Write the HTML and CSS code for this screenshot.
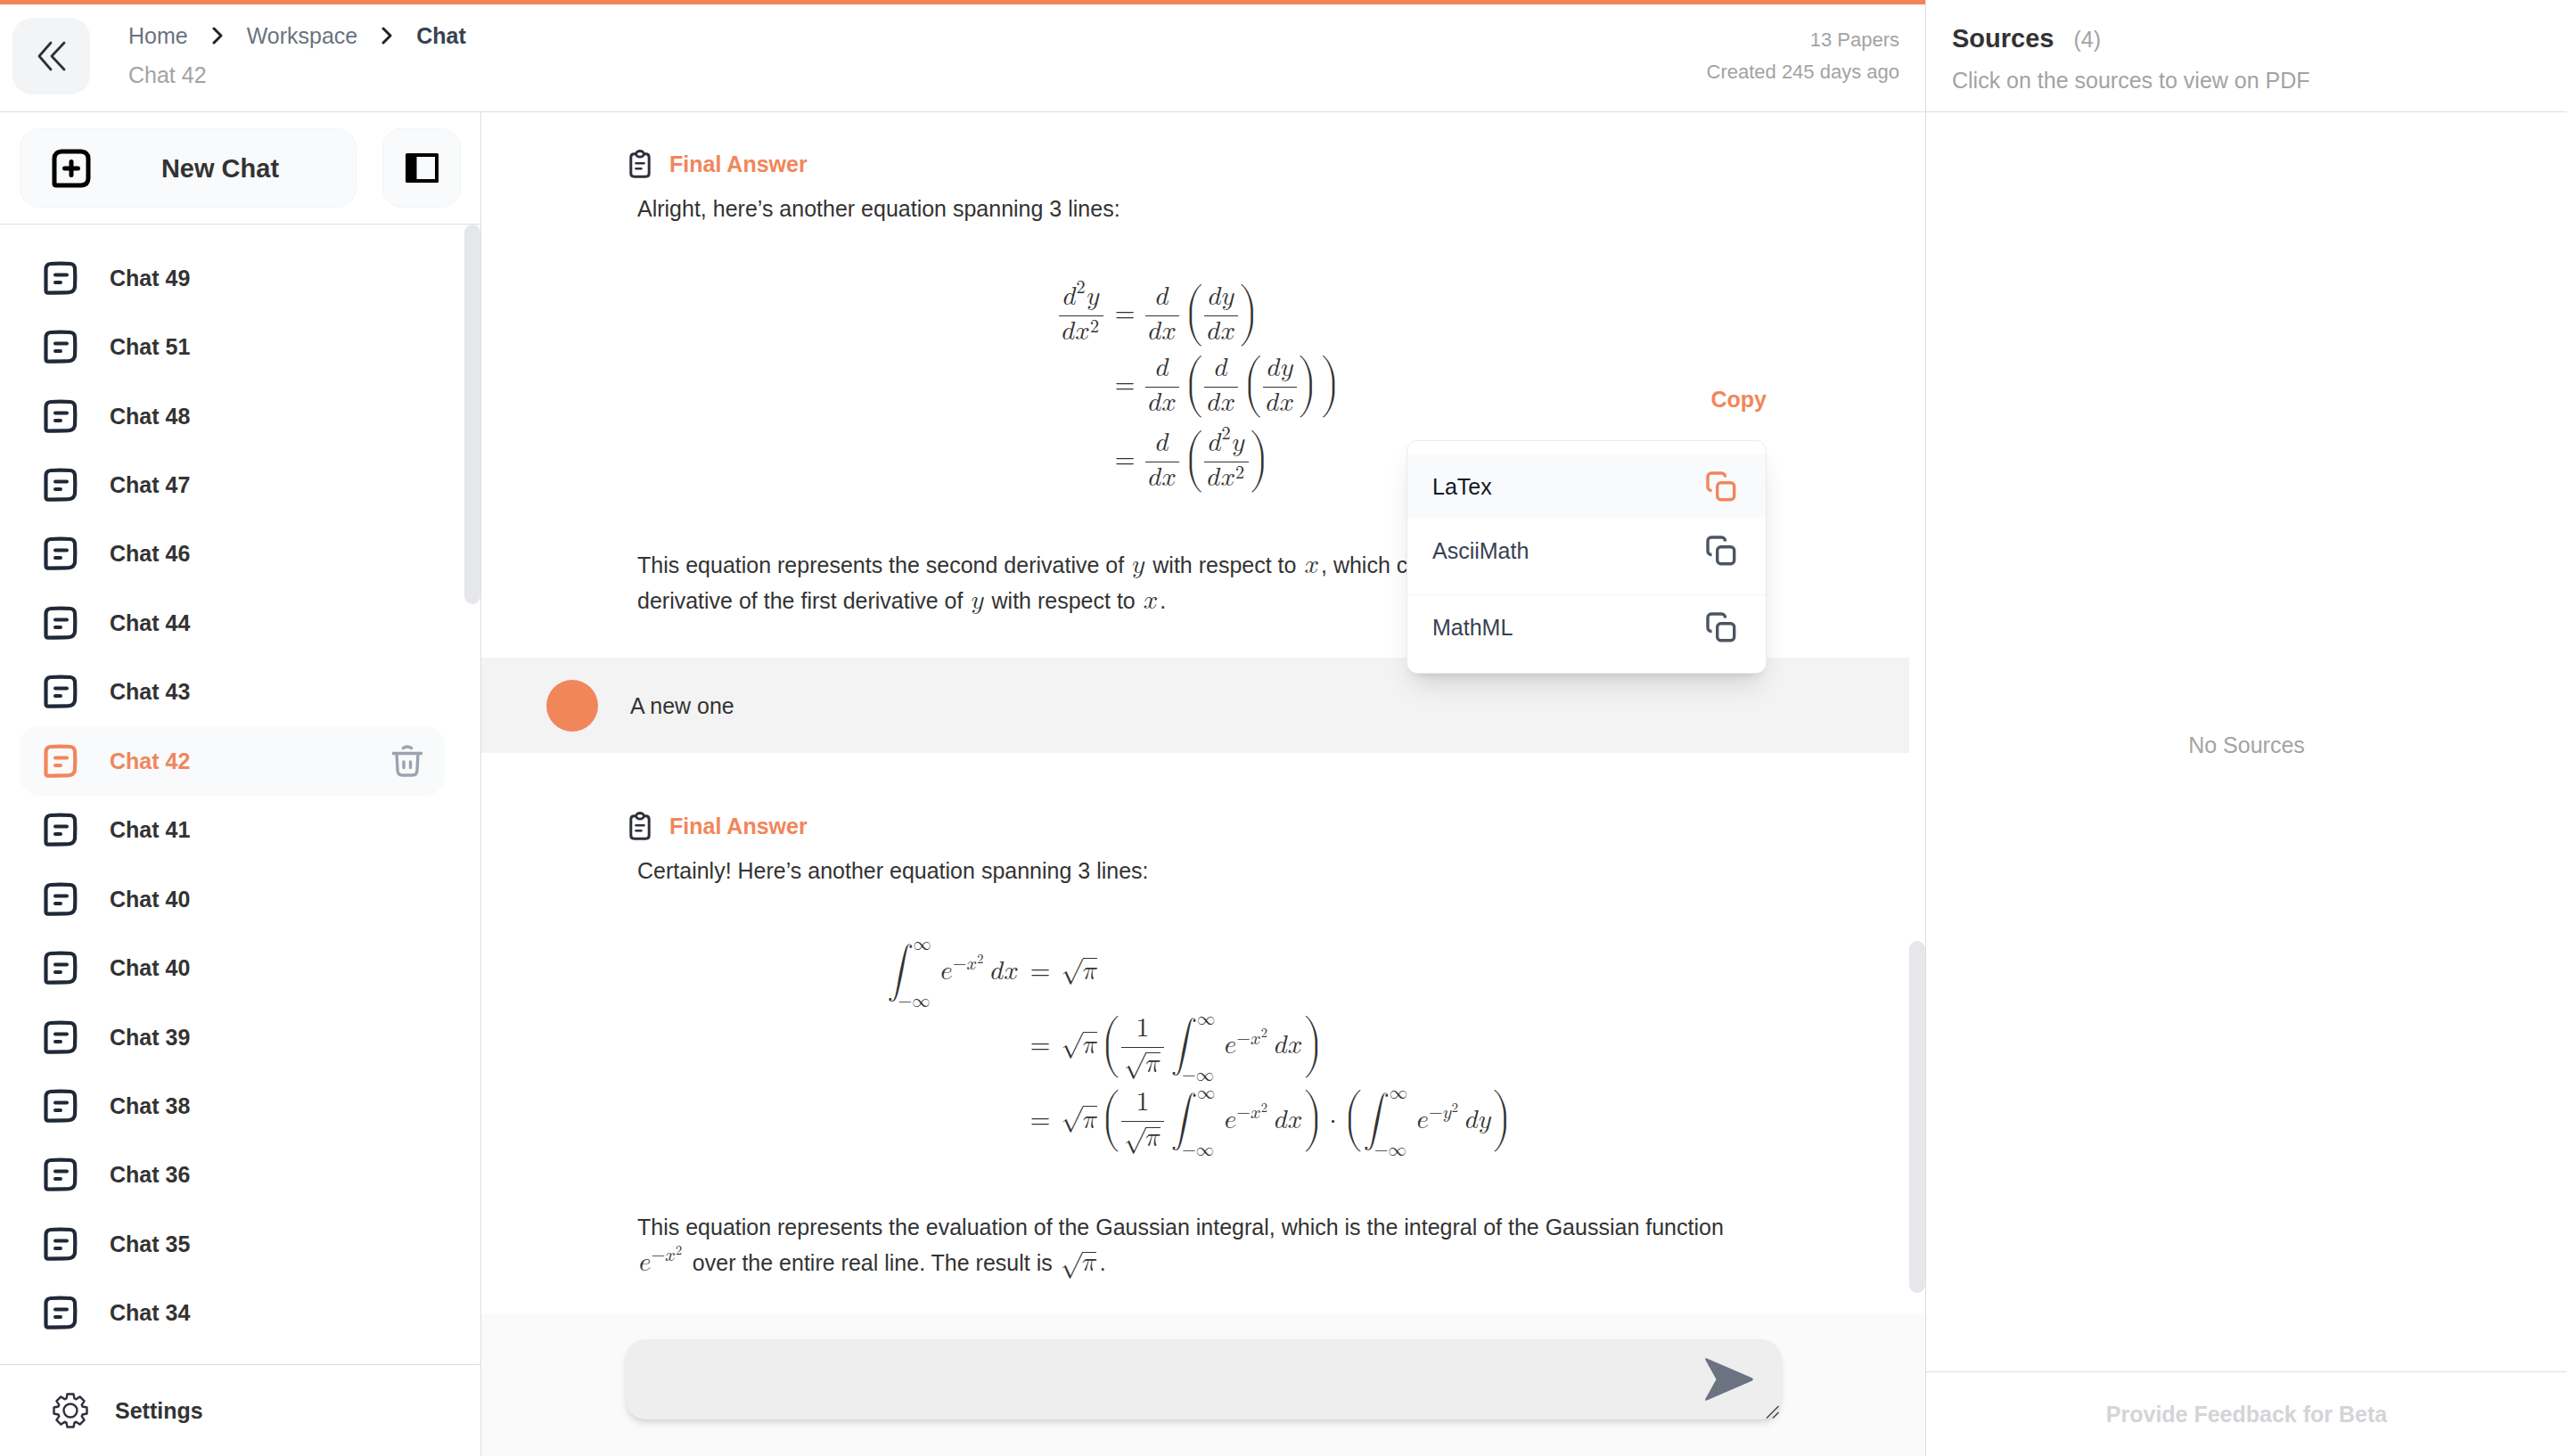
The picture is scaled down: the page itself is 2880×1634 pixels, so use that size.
FILE: index.html
```
<!DOCTYPE html>
<html lang="en">
<head>
<meta charset="utf-8">
<title>Chat 42</title>
<link rel="stylesheet" href="styles.css">
</head>
<body>
<svg class="sprite" aria-hidden="true">
  <symbol id="i-chat" viewBox="0 0 38 38"><path d="M2.500 33V9Q2.500 3.500 8 3Q19 2.200 30 3Q34.600 3.600 35 8Q35.600 18 35 29Q34.400 34.600 28 35.200Q20 35.600 5 35.600Q2.500 35.600 2.500 33Z" fill="none" stroke="currentColor" stroke-width="4.200"/><path d="M13 15.500H26M13 24H19" fill="none" stroke="currentColor" stroke-width="4" stroke-linecap="round"/></symbol>
  <symbol id="i-copy" viewBox="0 0 34 34"><path d="M6.500 21.500H6a4 4 0 0 1-4-4V6a4 4 0 0 1 4-4h11.500a4 4 0 0 1 4 4v.5" fill="none" stroke="currentColor" stroke-width="3.400"/><rect x="12.700" y="12.700" width="19" height="19" rx="4" fill="none" stroke="currentColor" stroke-width="3.400"/></symbol>
  <symbol id="i-note" viewBox="0 0 24 32"><path d="M8 4.800H5.500Q1.800 4.800 1.800 8.500V26.500Q1.800 30.200 5.500 30.200H18.500Q22.200 30.200 22.200 26.500V8.500Q22.200 4.800 18.500 4.800H16" fill="none" stroke="currentColor" stroke-width="3"/><ellipse cx="12" cy="4.800" rx="4.300" ry="3.300" fill="none" stroke="currentColor" stroke-width="2.800"/><path d="M7.500 15.200H16.500M7.500 21.200H13.500" fill="none" stroke="currentColor" stroke-width="2.600" stroke-linecap="round"/></symbol>
  <symbol id="i-next" viewBox="0 0 12 20"><path d="M2 2L10 10L2 18" fill="none" stroke="currentColor" stroke-width="3" stroke-linecap="round" stroke-linejoin="round"/></symbol>
</svg>
<div class="app">
  <header class="topbar">
    <button class="collapse" aria-label="Collapse"><svg width="32" height="34" viewBox="0 0 32 34"><path d="M15 2L2 17L15 32M30 2L16 17L30 32" fill="none" stroke="currentColor" stroke-width="2.800" stroke-linecap="round" stroke-linejoin="round"/></svg></button>
    <div class="crumbs">
      <nav>
        <a href="#">Home</a><svg width="12" height="20"><use href="#i-next"/></svg><a href="#">Workspace</a><svg width="12" height="20"><use href="#i-next"/></svg><a href="#" class="here">Chat</a>
      </nav>
      <p>Chat 42</p>
    </div>
    <div class="meta"><p>13 Papers</p><p>Created 245 days ago</p></div>
  </header>

  <aside class="sidebar">
    <div class="tools">
      <button class="new-chat"><svg width="44" height="44" viewBox="0 0 44 44"><path d="M3 39V11Q3 3.500 11 3H33Q41 3.500 41 11V33Q41 40.500 33 41H5Q3 41 3 39Z" fill="none" stroke="#000" stroke-width="5"/><path d="M22 14.500V29.500M14.500 22H29.500" stroke="#000" stroke-width="5" stroke-linecap="round"/></svg><span>New Chat</span></button>
      <button class="panel" aria-label="Toggle sidebar"><svg width="37" height="33" viewBox="0 0 37 33"><path fill="#000" fill-rule="evenodd" d="M1.500 0H35.500Q37 0 37 1.500V31.500Q37 33 35.500 33H1.500Q0 33 0 31.500V1.500Q0 0 1.500 0ZM12.500 4V29H33V4Z"/></svg></button>
    </div>
    <div class="history">
      <ul class="chats">
        <li><a href="#"><svg width="38" height="38"><use href="#i-chat"/></svg>Chat 49</a></li>
        <li><a href="#"><svg width="38" height="38"><use href="#i-chat"/></svg>Chat 51</a></li>
        <li><a href="#"><svg width="38" height="38"><use href="#i-chat"/></svg>Chat 48</a></li>
        <li><a href="#"><svg width="38" height="38"><use href="#i-chat"/></svg>Chat 47</a></li>
        <li><a href="#"><svg width="38" height="38"><use href="#i-chat"/></svg>Chat 46</a></li>
        <li><a href="#"><svg width="38" height="38"><use href="#i-chat"/></svg>Chat 44</a></li>
        <li><a href="#"><svg width="38" height="38"><use href="#i-chat"/></svg>Chat 43</a></li>
        <li class="current"><a href="#"><svg width="38" height="38"><use href="#i-chat"/></svg>Chat 42</a><button class="trash" aria-label="Delete chat"><svg width="34" height="36" viewBox="0 0 34 36"><path d="M1 9.500H33M12.500 3.500Q17 .5 21.500 3.500M5 9.500L6 28Q6 34 11.500 34H22.500Q28 34 28 28L29 9.500M13 19V25.500M20.500 19V25.500" fill="none" stroke="currentColor" stroke-width="3.400" stroke-linecap="round"/></svg></button></li>
        <li><a href="#"><svg width="38" height="38"><use href="#i-chat"/></svg>Chat 41</a></li>
        <li><a href="#"><svg width="38" height="38"><use href="#i-chat"/></svg>Chat 40</a></li>
        <li><a href="#"><svg width="38" height="38"><use href="#i-chat"/></svg>Chat 40</a></li>
        <li><a href="#"><svg width="38" height="38"><use href="#i-chat"/></svg>Chat 39</a></li>
        <li><a href="#"><svg width="38" height="38"><use href="#i-chat"/></svg>Chat 38</a></li>
        <li><a href="#"><svg width="38" height="38"><use href="#i-chat"/></svg>Chat 36</a></li>
        <li><a href="#"><svg width="38" height="38"><use href="#i-chat"/></svg>Chat 35</a></li>
        <li><a href="#"><svg width="38" height="38"><use href="#i-chat"/></svg>Chat 34</a></li>
      </ul>
      <div class="track"><div class="thumb thumb-history"></div></div>
    </div>
    <a href="#" class="settings"><svg width="40" height="40" viewBox="-20 -20 40 40"><path d="M-4.500-13.500L-3.500-18.500H3.500L4.500-13.500L6.400-12.700L10.600-15.600L15.600-10.600L12.700-6.400L13.500-4.500L18.500-3.500V3.500L13.500 4.500L12.700 6.400L15.600 10.600L10.600 15.600L6.400 12.700L4.500 13.500L3.500 18.500H-3.500L-4.500 13.500L-6.400 12.700L-10.600 15.600L-15.600 10.600L-12.700 6.400L-13.500 4.500L-18.500 3.500V-3.500L-13.500-4.500L-12.700-6.400L-15.600-10.600L-10.600-15.600L-6.400-12.700Z" fill="none" stroke="#2d303c" stroke-width="2.400" stroke-linejoin="round"/><circle r="7.500" fill="none" stroke="#2d303c" stroke-width="2.400"/></svg>Settings</a>
  </aside>

  <main class="main">
    <div class="thread-area">
      <div class="thread">
        <article class="answer first">
          <h2><svg width="24" height="32"><use href="#i-note"/></svg>Final Answer</h2>
          <p>Alright, here’s another equation spanning 3 lines:</p>
          <div class="equation">
            <math display="block">
              <mtable displaystyle="true">
                <mtr>
                  <mtd><mfrac><mrow><msup><mi>d</mi><mn>2</mn></msup><mi>y</mi></mrow><mrow><mspace width="3px"/><mi>d</mi><msup><mi>x</mi><mn>2</mn></msup><mspace width="3px"/></mrow></mfrac></mtd>
                  <mtd><mo lspace="13px" rspace="12px">=</mo><mfrac><mi>d</mi><mrow><mspace width="3px"/><mi>d</mi><mi>x</mi><mspace width="3px"/></mrow></mfrac><mspace width="3px"/><mrow><mo maxsize="69px">(</mo><mfrac><mrow><mi>d</mi><mi>y</mi></mrow><mrow><mspace width="3px"/><mi>d</mi><mi>x</mi><mspace width="3px"/></mrow></mfrac><mo maxsize="69px">)</mo></mrow></mtd>
                </mtr>
                <mtr>
                  <mtd></mtd>
                  <mtd><mo lspace="13px" rspace="12px">=</mo><mfrac><mi>d</mi><mrow><mspace width="3px"/><mi>d</mi><mi>x</mi><mspace width="3px"/></mrow></mfrac><mspace width="3px"/><mrow><mo maxsize="69px">(</mo><mfrac><mi>d</mi><mrow><mspace width="3px"/><mi>d</mi><mi>x</mi><mspace width="3px"/></mrow></mfrac><mspace width="3px"/><mrow><mo maxsize="69px">(</mo><mfrac><mrow><mi>d</mi><mi>y</mi></mrow><mrow><mspace width="3px"/><mi>d</mi><mi>x</mi><mspace width="3px"/></mrow></mfrac><mo maxsize="69px">)</mo></mrow><mo maxsize="69px">)</mo></mrow></mtd>
                </mtr>
                <mtr>
                  <mtd></mtd>
                  <mtd><mo lspace="13px" rspace="12px">=</mo><mfrac><mi>d</mi><mrow><mspace width="3px"/><mi>d</mi><mi>x</mi><mspace width="3px"/></mrow></mfrac><mspace width="3px"/><mrow><mo maxsize="69px">(</mo><mfrac><mrow><msup><mi>d</mi><mn>2</mn></msup><mi>y</mi></mrow><mrow><mspace width="3px"/><mi>d</mi><msup><mi>x</mi><mn>2</mn></msup><mspace width="3px"/></mrow></mfrac><mo maxsize="69px">)</mo></mrow></mtd>
                </mtr>
              </mtable>
            </math>
            <div class="copy-wrap">
              <button class="copy">Copy</button>
              <div class="menu">
                <div class="group">
                  <button class="item active">LaTex<svg width="34" height="34"><use href="#i-copy"/></svg></button>
                  <button class="item">AsciiMath<svg width="34" height="34"><use href="#i-copy"/></svg></button>
                </div>
                <div class="group">
                  <button class="item">MathML<svg width="34" height="34"><use href="#i-copy"/></svg></button>
                </div>
              </div>
            </div>
          </div>
          <p>This equation represents the second derivative of <math><mi>y</mi></math> with respect to <math><mi>x</mi></math>, which can be obtained by taking the derivative of the first derivative of <math><mi>y</mi></math> with respect to <math><mi>x</mi></math>.</p>
        </article>

        <div class="question"><span class="avatar"></span><p>A new one</p></div>

        <article class="answer">
          <h2><svg width="24" height="32"><use href="#i-note"/></svg>Final Answer</h2>
          <p>Certainly! Here’s another equation spanning 3 lines:</p>
          <div class="equation">
            <math display="block">
              <mtable displaystyle="true">
                <mtr>
                  <mtd><msubsup><mo lspace="0px" rspace="0px">∫</mo><mrow><mo>−</mo><mi>∞</mi></mrow><mi>∞</mi></msubsup><msup><mi>e</mi><mrow><mo>−</mo><msup><mi>x</mi><mn>2</mn></msup></mrow></msup><mspace width="5px"/><mi>d</mi><mi>x</mi></mtd>
                  <mtd><mo lspace="13px" rspace="12px">=</mo><msqrt><mspace height="20px"/><mi>π</mi></msqrt></mtd>
                </mtr>
                <mtr>
                  <mtd></mtd>
                  <mtd><mo lspace="13px" rspace="12px">=</mo><msqrt><mspace height="20px"/><mi>π</mi></msqrt><mrow><mo maxsize="69px">(</mo><mfrac><mn>1</mn><mrow><mspace width="3px"/><msqrt><mspace height="20px"/><mi>π</mi></msqrt><mspace width="3px"/></mrow></mfrac><mspace width="8px"/><msubsup><mo lspace="0px" rspace="0px">∫</mo><mrow><mo>−</mo><mi>∞</mi></mrow><mi>∞</mi></msubsup><msup><mi>e</mi><mrow><mo>−</mo><msup><mi>x</mi><mn>2</mn></msup></mrow></msup><mspace width="5px"/><mi>d</mi><mi>x</mi><mo maxsize="69px">)</mo></mrow></mtd>
                </mtr>
                <mtr>
                  <mtd></mtd>
                  <mtd><mo lspace="13px" rspace="12px">=</mo><msqrt><mspace height="20px"/><mi>π</mi></msqrt><mrow><mo maxsize="69px">(</mo><mfrac><mn>1</mn><mrow><mspace width="3px"/><msqrt><mspace height="20px"/><mi>π</mi></msqrt><mspace width="3px"/></mrow></mfrac><mspace width="8px"/><msubsup><mo lspace="0px" rspace="0px">∫</mo><mrow><mo>−</mo><mi>∞</mi></mrow><mi>∞</mi></msubsup><msup><mi>e</mi><mrow><mo>−</mo><msup><mi>x</mi><mn>2</mn></msup></mrow></msup><mspace width="5px"/><mi>d</mi><mi>x</mi><mo maxsize="69px">)</mo></mrow><mo>⋅</mo><mrow><mo maxsize="69px">(</mo><msubsup><mo lspace="0px" rspace="0px">∫</mo><mrow><mo>−</mo><mi>∞</mi></mrow><mi>∞</mi></msubsup><msup><mi>e</mi><mrow><mo>−</mo><msup><mi>y</mi><mn>2</mn></msup></mrow></msup><mspace width="5px"/><mi>d</mi><mi>y</mi><mo maxsize="69px">)</mo></mrow></mtd>
                </mtr>
              </mtable>
            </math>
          </div>
          <p>This equation represents the evaluation of the Gaussian integral, which is the integral of the Gaussian function <math><msup><mi>e</mi><mrow><mo>−</mo><msup><mi>x</mi><mn>2</mn></msup></mrow></msup></math> over the entire real line. The result is <math><msqrt><mspace height="20px"/><mi>π</mi></msqrt></math>.</p>
        </article>
      </div>
      <div class="track"><div class="thumb thumb-thread"></div></div>
    </div>
    <form class="composer">
      <div class="field">
        <textarea aria-label="Message"></textarea>
        <button type="button" class="send" aria-label="Send"><svg width="54" height="48" viewBox="0 0 54 48"><path d="M1.500 .3L53 22.500Q54.500 24 53 25.500L1.500 47.700Q-.5 48 .3 46L12.500 24L.3 2Q-.5 0 1.500 .3Z" fill="#6b7280"/></svg></button>
        <svg class="grip" width="16" height="16" viewBox="0 0 16 16"><path d="M1 14.500L14.500 1M8 14.500L14.500 8" stroke="#444" stroke-width="1.500"/></svg>
      </div>
    </form>
  </main>

  <section class="sources">
    <header><h1>Sources <span>(4)</span></h1><p>Click on the sources to view on PDF</p></header>
    <div class="empty">No Sources</div>
    <footer><button>Provide Feedback for Beta</button></footer>
  </section>
</div>
</body>
</html>
```
FILE: styles.css
```
* { box-sizing: border-box; margin: 0; padding: 0; }
body { font: 25px/40px "Liberation Sans", Arial, sans-serif; color: #333; background: #fff; }
button { font: inherit; color: inherit; border: 0; background: none; cursor: pointer; }
a { color: inherit; text-decoration: none; }
svg { display: block; flex: none; }
.sprite { display: none; }

.app {
  display: grid;
  grid-template: 126px minmax(0, 1fr) / 540px minmax(0, 1fr) 25%;
  grid-template-areas: "top top sources" "side main sources";
  height: 100vh;
}

/* top bar */
.topbar { grid-area: top; display: flex; align-items: flex-start; padding: 13px 29px 0 14px; border-top: 5px solid #f1865b; border-bottom: 1px solid #dedede; }
.collapse { display: grid; place-items: center; width: 87px; height: 86px; margin-top: 2px; border-radius: 22px; background: #f3f4f6; color: #2d303c; }
.crumbs { margin-left: 43px; line-height: 44px; }
.crumbs nav { display: flex; align-items: center; color: #6b7280; }
.crumbs nav svg { margin: 0 27px; color: #222; }
.crumbs .here { color: #374151; font-weight: bold; }
.crumbs p { color: #a3a3a3; }
.meta { margin: 9px 0 0 auto; text-align: right; font-size: 22px; line-height: 36px; color: #a3a3a3; }

/* sidebar */
.sidebar { grid-area: side; display: flex; flex-direction: column; border-right: 1px solid #dedede; font-weight: bold; min-height: 0; }
.tools { display: flex; gap: 29px; padding: 18px 22px; border-bottom: 1px solid #dedede; }
.new-chat, .panel { display: flex; align-items: center; height: 89px; border: 1px solid #f3f4f6; border-radius: 22px; background: #f9fafb; }
.new-chat { flex: 1; padding: 0 35px; font-size: 29px; font-weight: bold; }
.new-chat span { flex: 1; text-align: center; padding-left: 28px; }
.panel { width: 88px; justify-content: center; }
.history { flex: 1; display: flex; min-height: 0; }
.chats { flex: 1; display: grid; grid-auto-rows: 1fr; padding: 21px 22px 19px 22px; list-style: none; }
.chats li { display: flex; align-items: center; border-radius: 22px; padding: 0 25px 0 27px; }
.chats a { flex: 1; display: flex; align-items: center; gap: 36px; }
.chats svg { color: #1f2937; }
.chats .current { background: #f9fafb; color: #f1865b; }
.chats .current svg { color: #f1865b; }
.chats .current .trash svg { color: #9ca3af; }
.track { position: relative; flex: none; width: 18px; }
.thumb { position: absolute; left: 0; right: 0; border-radius: 9px; background: #e5e7eb; }
.thumb-history { top: 0; height: calc(100% / 3); }
.settings { display: flex; align-items: center; gap: 30px; height: 103px; padding: 0 59px; border-top: 1px solid #dedede; }

/* conversation */
.main { grid-area: main; display: flex; flex-direction: column; min-height: 0; }
.thread-area { flex: 1; display: flex; min-height: 0; }
.thread { flex: 1; min-width: 0; }
.answer { padding: 62px 163px 0 175px; }
.answer.first { padding-top: 38px; padding-bottom: 44px; }
.answer h2 { display: flex; align-items: center; gap: 21px; margin: 0 0 10px -9px; font-size: 25px; color: #f1865b; }
.answer h2 svg { color: #2d303c; }
math { font-family: math; font-size: 29px; line-height: 1; }
p math { margin: 0 2px; }
.equation { display: grid; height: 360px; }
.equation > math { grid-area: 1 / 1; align-self: center; }
mtable { border-spacing: 0; }
mtd { padding: 0; text-align: left; }
mtd:first-child { text-align: right; }
mtr + mtr mtd { padding-top: 10px; }
msubsup { margin-right: -7px; }
msqrt { margin-right: -5px; }
.copy-wrap { grid-area: 1 / 1; justify-self: end; align-self: start; position: relative; margin-right: -3px; padding-top: 174px; }
.copy { display: block; font-weight: bold; color: #f1865b; line-height: 40px; }
.menu { position: absolute; z-index: 2; top: 240px; right: 0; width: 404px; border: 1px solid #ececec; border-radius: 12px; background: #fff; box-shadow: 0 18px 30px -6px rgba(0,0,0,.12), 0 8px 12px -8px rgba(0,0,0,.14); color: #374151; overflow: hidden; }
.group { padding: 15px 0 13px; }
.group + .group { padding-top: 0; padding-bottom: 15px; border-top: 1px solid #f3f4f6; }
.item { display: flex; align-items: center; justify-content: space-between; width: 100%; height: 72px; padding: 0 33px 0 28px; }
.item svg { color: #4b5563; }
.item.active { background: #f9fafb; color: #111827; }
.item.active svg { color: #f1865b; }
.question { display: flex; align-items: center; gap: 36px; height: 107px; padding-left: 73px; background: #f3f3f3; }
.avatar { width: 58px; height: 58px; border-radius: 50%; background: #f1865b; }
.thumb-thread { top: 69%; bottom: 23px; }

/* composer */
.composer { padding: 29px 162px 41px; background: #fafafa; }
.field { position: relative; display: flex; }
.field textarea { flex: 1; height: 90px; padding: 24px 100px 24px 28px; border: 0; border-radius: 22px; background: #eee; box-shadow: 0 6px 10px -2px rgba(0,0,0,.12), 0 2px 6px -2px rgba(0,0,0,.1); font: inherit; resize: none; outline: 0; }
.send { position: absolute; right: 31px; top: 21px; }
.grip { position: absolute; right: 1px; bottom: 0; }

/* sources */
.sources { grid-area: sources; display: flex; flex-direction: column; border-left: 1px solid #dedede; color: #a3a3a3; }
.sources header { height: 126px; padding: 20px 29px 0; border-bottom: 1px solid #dedede; line-height: 46px; }
.sources h1 { font-size: 29px; color: #333; }
.sources h1 span { margin-left: 14px; font-size: 25px; font-weight: normal; color: #a3a3a3; }
.empty { flex: 1; display: grid; place-items: center; padding-top: 6px; }
.sources footer { display: grid; place-items: center; height: 95px; border-top: 1px solid #dedede; }
.sources footer button { font-weight: bold; color: #d4d4d8; }
```
